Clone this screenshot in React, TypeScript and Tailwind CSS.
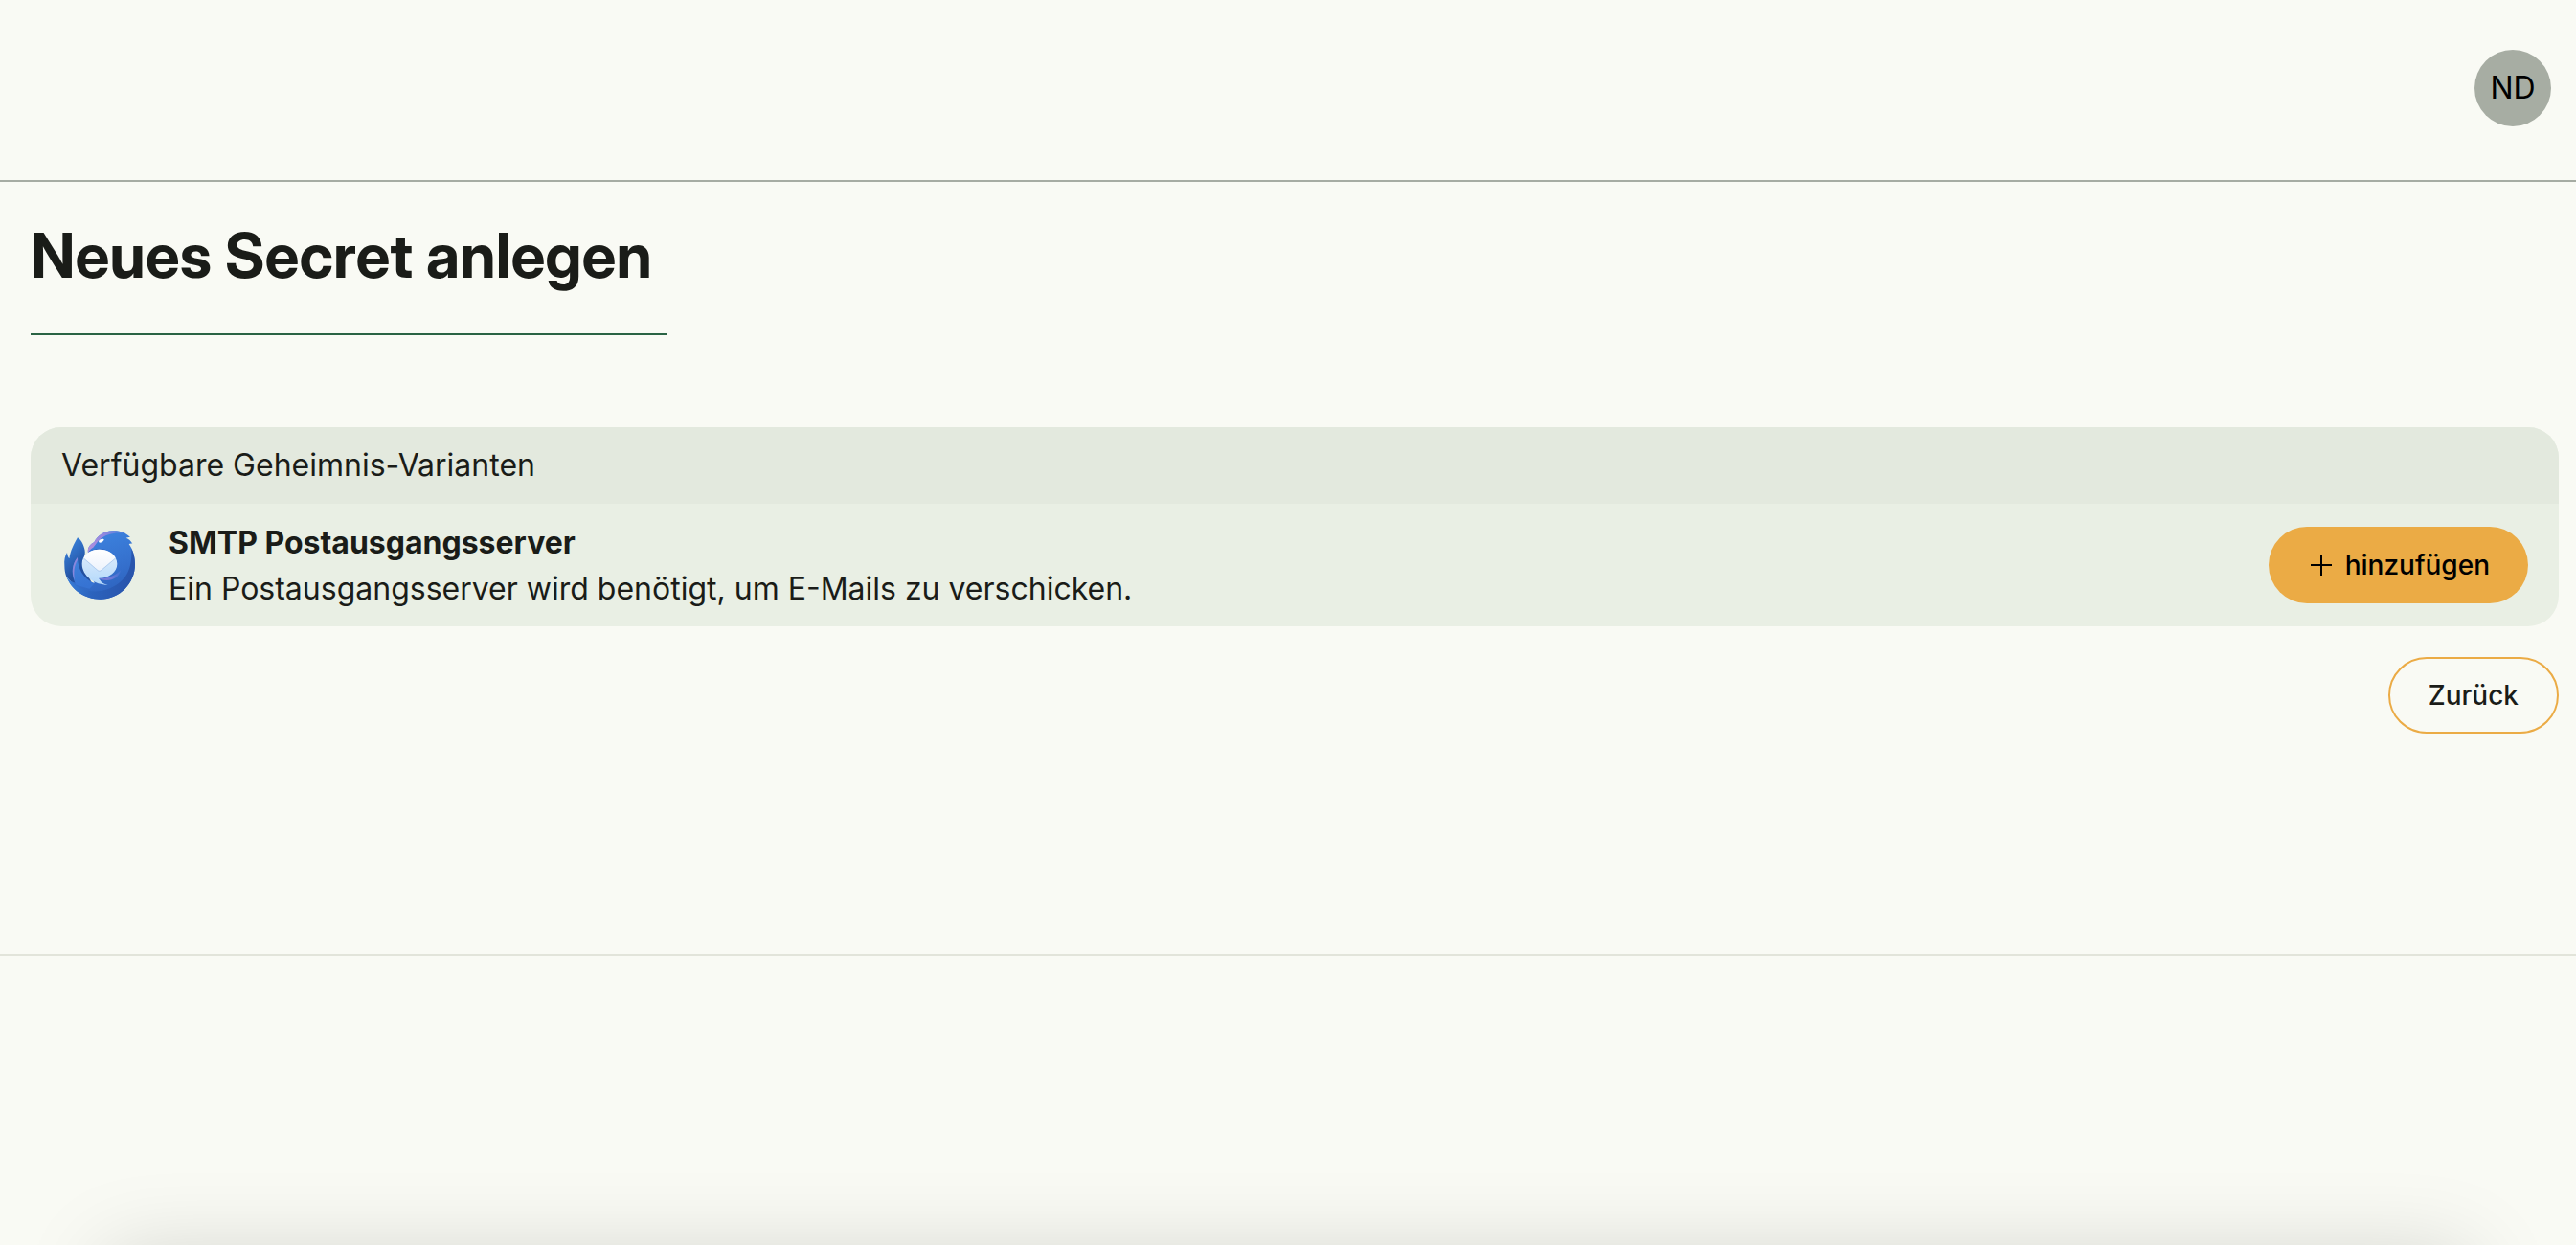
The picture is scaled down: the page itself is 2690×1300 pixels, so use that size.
function MailBirdIcon() {
  return (
    <svg viewBox="42 30 240 240" className="size-20 shrink-0" aria-hidden="true">
      <defs>
        <linearGradient id="body" x1="150" y1="50" x2="215" y2="240" gradientUnits="userSpaceOnUse">
          <stop offset="0" stopColor="#3c82de" />
          <stop offset="0.6" stopColor="#3570cd" />
          <stop offset="1" stopColor="#2d62bd" />
        </linearGradient>
        <linearGradient id="base" x1="55" y1="170" x2="262" y2="215" gradientUnits="userSpaceOnUse">
          <stop offset="0" stopColor="#3a82dc" />
          <stop offset="0.45" stopColor="#2c63bd" />
          <stop offset="1" stopColor="#2954ab" />
        </linearGradient>
        <linearGradient id="wing" x1="56" y1="110" x2="106" y2="160" gradientUnits="userSpaceOnUse">
          <stop offset="0" stopColor="#3478d0" />
          <stop offset="1" stopColor="#23509f" />
        </linearGradient>
        <linearGradient id="feather" x1="92" y1="130" x2="120" y2="215" gradientUnits="userSpaceOnUse">
          <stop offset="0" stopColor="#4080da" />
          <stop offset="1" stopColor="#3673d3" />
        </linearGradient>
        <linearGradient id="crest" x1="125" y1="105" x2="240" y2="45" gradientUnits="userSpaceOnUse">
          <stop offset="0" stopColor="#b191de" />
          <stop offset="0.5" stopColor="#9488df" />
          <stop offset="1" stopColor="#4a80de" />
        </linearGradient>
        <linearGradient id="orb" x1="160" y1="100" x2="160" y2="212" gradientUnits="userSpaceOnUse">
          <stop offset="0" stopColor="#e3effc" />
          <stop offset="1" stopColor="#b3d8fa" />
        </linearGradient>
        <linearGradient id="flap" x1="160" y1="100" x2="160" y2="166" gradientUnits="userSpaceOnUse">
          <stop offset="0" stopColor="#ffffff" />
          <stop offset="1" stopColor="#edf3fc" />
        </linearGradient>
        <linearGradient id="tip" x1="160" y1="195" x2="228" y2="168" gradientUnits="userSpaceOnUse">
          <stop offset="0" stopColor="#7478d6" />
          <stop offset="0.5" stopColor="#6f7ad8" />
          <stop offset="1" stopColor="#3a70cf" />
        </linearGradient>
      </defs>
      <path d="M52 152C50 134 54 120 60 111C61 119 63 125 67 130C71 103 82 84 93 64C101 68 110 81 114 97C117 106 117 116 114 124L116 160L140 212L84 214L58 187C54 176 52 164 52 152Z" fill="url(#wing)" />
      <path d="M126 112C123 96 132 85 145 79C154 58 176 44 203 43C226 42 246 50 258 63C252 63 248 64 245 65C254 68 260 74 265 83C261 82 257 83 254 84C266 101 273 122 273 147C273 208 225 257 164 257C116 257 76 230 58 187C66 198 76 205 88 206L146 206L122 150Z" fill="url(#body)" />
      <path d="M88 212C72 182 74 148 93 126C93 160 110 192 146 208L130 224Z" fill="url(#feather)" />
      <path d="M58 187C98 240 165 242 208 216C245 194 264 166 262 98C269 112 273 129 273 147C273 208 225 257 164 257C116 257 76 230 58 187Z" fill="url(#base)" />
      <path d="M84 198C73 174 76 146 93 126L93 134C82 152 80 174 84 198Z" fill="#8a86dc" />
      <path d="M126 112C123 96 132 85 145 79C154 58 176 44 203 43C220 42 233 46 243 51C212 46 182 53 164 69C153 78 150 87 142 95C135 99 130 104 126 112Z" fill="url(#crest)" />
      <path d="M159 75C163 69 171 67 176 70C175 77 166 82 160 79Z" fill="#ffffff" />
      <path d="M126 114C138 101 158 95 180 101L140 130Z" fill="#2a5ab2" opacity="0.6" />
      <path d="M107 146C107 120 131 101 161 101C192 101 217 120 217 146C217 172 192 191 160 191C164 201 172 209 188 212C148 212 107 185 107 146Z" fill="url(#orb)" />
      <path d="M112 127C121 111 139 101 161 101C184 101 203 111 212 127L168 164C164 168 159 168 155 164Z" fill="url(#flap)" />
      <path d="M112 129L155 166C159 170 164 170 168 166L212 129" fill="none" stroke="#a5c1e8" strokeWidth="2" />
      <path d="M158 192C186 193 212 184 229 164C226 184 205 198 184 198C174 198 165 196 158 192Z" fill="url(#tip)" />
    </svg>
  );
}

function PlusIcon() {
  return (
    <svg viewBox="0 0 22 22" className="size-[22px]" fill="none" stroke="currentColor" strokeWidth="2" aria-hidden="true">
      <path d="M11 0V22M0 11H22" />
    </svg>
  );
}

const variants = [
  {
    name: "SMTP Postausgangsserver",
    description: "Ein Postausgangsserver wird benötigt, um E-Mails zu verschicken.",
  },
];

export default function App() {
  return (
    <div className="relative flex min-h-screen flex-col overflow-hidden bg-[#f9faf4] font-['Inter',sans-serif] text-[32px] leading-[48px] text-[#1a1c18]">
      <header className="flex justify-end border-b-2 border-[#a6aca3] pt-[52px] pr-[26px] pb-14">
        <button type="button" className="size-20 rounded-full bg-[#a7ada3] text-black">
          ND
        </button>
      </header>

      <main className="flex flex-col items-start border-b-2 border-[#e2e4da] pt-8 pr-[18px] pb-[230px] pl-8">
        <h1 className="border-b-2 border-[#2a6344] pr-4 pb-9 font-['Inter_Display','Inter',sans-serif] text-[64px] leading-[90px] font-bold">
          Neues Secret anlegen
        </h1>

        <section className="mt-24 w-full overflow-hidden rounded-4xl bg-[#e9efe4]" aria-labelledby="variants">
          <h2 id="variants" className="bg-[#e3e9de] px-8 py-4">
            Verfügbare Geheimnis-Varianten
          </h2>
          <ul>
            {variants.map((variant) => (
              <li key={variant.name} className="flex min-h-32 items-center gap-8 px-8">
                <MailBirdIcon />
                <div className="flex-1 pt-0.5">
                  <h3 className="font-bold">{variant.name}</h3>
                  <p>{variant.description}</p>
                </div>
                <button
                  type="button"
                  className="flex h-20 items-center gap-3.5 rounded-full bg-[#ebab45] pr-10 pl-11 text-[28px] font-medium text-black"
                >
                  <PlusIcon />
                  hinzufügen
                </button>
              </li>
            ))}
          </ul>
        </section>

        <button
          type="button"
          className="mt-8 h-20 self-end rounded-full border-2 border-[#ebab45] px-10 text-[28px] font-medium"
        >
          Zurück
        </button>
      </main>

      <div className="absolute inset-x-28 top-full h-20 shadow-[0_12px_90px_0_rgba(0,0,0,0.17)]" />
    </div>
  );
}
